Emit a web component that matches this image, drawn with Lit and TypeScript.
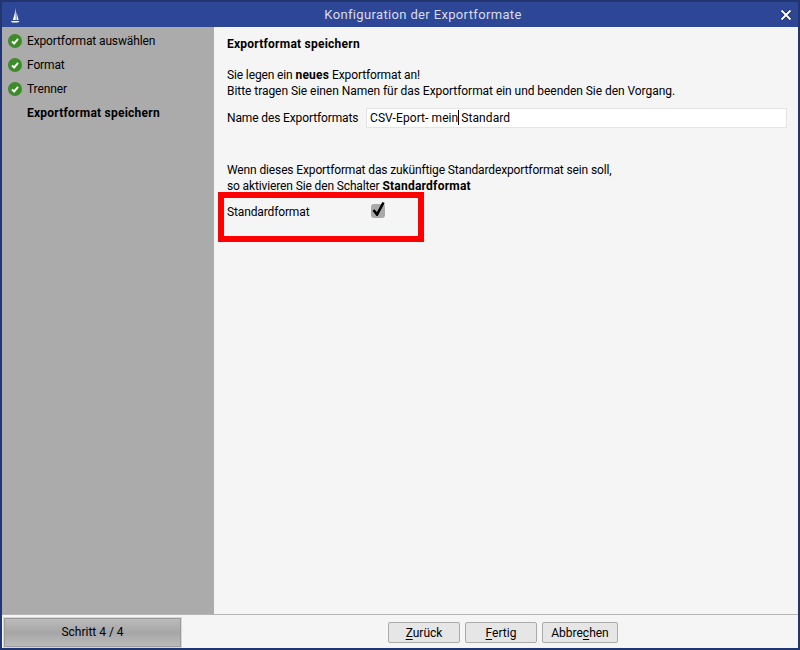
import { LitElement, html, css, svg } from "lit";
import { customElement } from "lit/decorators.js";

const check = svg`<svg class="ok" viewBox="0 0 14 14" width="14" height="14"><circle cx="7" cy="7" r="7" fill="#3f8b2a"/><path d="M4 7.4 6.1 9.6 10 4.9" fill="none" stroke="#fff" stroke-width="2"/></svg>`;

@customElement("app-root")
export class AppRoot extends LitElement {
  static styles = css`
    :host { display: block; width: 800px; height: 650px; font-family: Roboto, "Noto Sans", sans-serif; font-size: 12px; color: #000; letter-spacing: -0.13px; }
    .win { box-sizing: border-box; width: 800px; height: 650px; display: flex; flex-direction: column; background: #f5f5f5; border: 2px solid #22356f; }
    .title { height: 25px; flex: none; background: #2e4696; color: #d8dded; display: flex; align-items: center; position: relative; }
    .title .logo { position: absolute; left: 8px; top: 4px; }
    .title .x { position: absolute; right: 6px; top: 7px; }
    .title span { flex: 1; text-align: center; font-size: 13px; letter-spacing: 0.35px; padding-left: 46px; }
    .main { flex: 1; display: flex; min-height: 0; }
    .side { width: 212px; flex: none; background: #ababab; padding: 2px 0 0 6px; box-sizing: border-box; }
    .step { height: 24px; display: flex; align-items: center; gap: 5px; line-height: 24px; }
    .step .ok { flex: none; }
    .step .sp { width: 14px; flex: none; }
    .step b, .h, p b { font-weight: 700; letter-spacing: 0.24px; }
    .content { flex: 1; position: relative; padding: 9px 11px 0 13px; box-sizing: border-box; }
    .h { line-height: 16px; margin-bottom: 15px; }
    p { margin: 0; line-height: 16px; }
    .wide { letter-spacing: -0.05px; }
    .row { display: flex; align-items: center; margin-top: 9px; height: 20px; }
    .row label { width: 139px; flex: none; white-space: nowrap; }
    .input { flex: 1; height: 20px; box-sizing: border-box; background: #fff; border: 1px solid #e4e4e4; padding-left: 3px; line-height: 18px; white-space: pre; letter-spacing: 0.08px; }
    .caret { display: inline-block; width: 1px; height: 15px; background: #000; vertical-align: -3px; margin-right: 2px; }
    .p2 { margin-top: 34px; }
    .row2 { display: flex; align-items: center; margin-top: 8px; height: 20px; }
    .row2 label { width: 144px; flex: none; }
    .cb { width: 14px; height: 14px; border-radius: 3px; background: #a9a9a9; position: relative; margin-bottom: 2px; }
    .cb svg { position: absolute; left: 0; top: -3px; }
    .mark { position: absolute; left: 4px; top: 165px; width: 206px; height: 50px; box-sizing: border-box; border: 6px solid #f00; }
    .foot { height: 33px; flex: none; border-top: 1px solid #b4b4b4; display: flex; align-items: center; background: #f5f5f5; position: relative; letter-spacing: 0; }
    .stepbtn { width: 179px; height: 31px; box-sizing: border-box; margin: 1px 0 0 1px; border: 1px solid #d8d8d8; outline: 1px solid #9a9a9a; outline-offset: -2px; background: linear-gradient(#bdbdbd, #a6a6a6 50%, #bcbcbc); display: flex; align-items: center; justify-content: center; }
    .btns { display: flex; gap: 5px; margin-left: 206px; margin-top: 2px; }
    .btn { height: 21px; box-sizing: border-box; border: 1px solid #ababab; border-radius: 2px; background: #e6e6e6; display: flex; align-items: center; justify-content: center; }
    .b1 { width: 72px; } .b2 { width: 72px; } .b3 { width: 76px; }
    u { text-underline-offset: 2px; }
  `;

  render() {
    return html`<div class="win">
      <div class="title">
        <svg class="logo" width="12" height="18" viewBox="0 0 12 18"><path d="M5.6 1 C5.4 5 4.4 9 2.8 14 L5.8 14 Z M6.5 6 L8.6 14 L6.5 14 Z M1 15 H9.5 L8 16.5 H2 Z" fill="#fff"/></svg>
        <span>Konfiguration der Exportformate</span>
        <svg class="x" width="12" height="12" viewBox="0 0 12 12"><path d="M1.5 1.5 10.5 10.5 M10.5 1.5 1.5 10.5" stroke="#10204f" stroke-width="3.6"/><path d="M1.5 1.5 10.5 10.5 M10.5 1.5 1.5 10.5" stroke="#fff" stroke-width="2"/></svg>
      </div>
      <div class="main">
        <div class="side">
          <div class="step">${check}<span>Exportformat auswählen</span></div>
          <div class="step">${check}<span>Format</span></div>
          <div class="step">${check}<span>Trenner</span></div>
          <div class="step"><i class="sp"></i><b>Exportformat speichern</b></div>
        </div>
        <div class="content">
          <div class="h">Exportformat speichern</div>
          <p>Sie legen ein <b>neues</b> Exportformat an!<br><span class="wide">Bitte tragen Sie einen Namen für das Exportformat ein und beenden Sie den Vorgang.</span></p>
          <div class="row"><label>Name des Exportformats</label><div class="input">CSV-Eport- mein<i class="caret"></i>Standard</div></div>
          <p class="p2">Wenn dieses Exportformat das zukünftige Standardexportformat sein soll,<br>so aktivieren Sie den Schalter <b>Standardformat</b></p>
          <div class="row2"><label>Standardformat</label><div class="cb"><svg width="14" height="15" viewBox="0 0 14 15"><path d="M2.5 9 6 13.5 12.5 1.5" fill="none" stroke="#000" stroke-width="2.6"/></svg></div></div>
          <div class="mark"></div>
        </div>
      </div>
      <div class="foot">
        <div class="stepbtn">Schritt 4 / 4</div>
        <div class="btns">
          <div class="btn b1"><span><u>Z</u>urück</span></div>
          <div class="btn b2"><span><u>F</u>ertig</span></div>
          <div class="btn b3"><span>Abbre<u>c</u>hen</span></div>
        </div>
      </div>
    </div>`;
  }
}
